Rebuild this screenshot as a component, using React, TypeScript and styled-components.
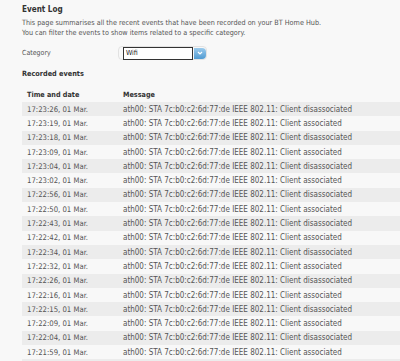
import React from 'react'
import styled, { createGlobalStyle } from 'styled-components'

const GlobalStyle = createGlobalStyle`
body {
  margin : 0;
  background : #f8f8f8;
  font-family : "DejaVu Sans Condensed", "DejaVu Sans", sans-serif;
  color : #555;
}
`

const Page = styled.div`
padding : 3px 0 0 22px;
overflow : hidden;
height : 361px;
box-sizing : border-box;
`

const Title = styled.h1`
margin : 0;
font-size : 8.1px;
font-weight : bold;
color : #333;
line-height : 12px;
`

const Intro = styled.p`
margin : 3px 0 0;
font-size : 7.2px;
line-height : 10px;
`

const FilterRow = styled.div`
display : flex;
align-items : center;
margin-top : 8px;
height : 14px;
`

const Label = styled.span`
width : 96px;
font-size : 7px;
`

const SelectWrap = styled.div`
display : flex;
align-items : center;
padding-left : 4px;
border : solid 1px #e2e2e2;
border-radius : 4px;
height : 12px;
`

const SelectBox = styled.div`
width : 66px;
height : 11px;
border : solid 1px #333;
background : white;
font-size : 7px;
line-height : 11px;
padding-left : 2px;
color : #222;
`

const SelectButton = styled.div`
width : 12px;
height : 11px;
margin-left : 1px;
border-radius : 0 4px 4px 0;
background : linear-gradient(#9ccbec, #4f9ad2);
display : flex;
align-items : center;
justify-content : center;
`

const Section = styled.h2`
margin : 8px 0 0;
font-size : 7.25px;
font-weight : bold;
color : #333;
line-height : 12px;
`

const EventList = styled.div`
margin-top : 6px;
width : 378px;
`

const Line = styled.div<{ $striped?: boolean; $head?: boolean }>`
display : flex;
align-items : center;
height : ${p => p.$head ? '16px' : '14.3px'};
background : ${p => p.$striped ? '#ececec' : 'transparent'};
font-size : ${p => p.$head ? '7.2px' : '7.7px'};
font-weight : ${p => p.$head ? 'bold' : 'normal'};
color : ${p => p.$head ? '#333' : '#555'};
white-space : nowrap;
`

const TimeCol = styled.span`
width : 91px;
padding-left : 5px;
flex-shrink : 0;
`

const MessageCol = styled.span<{ $head?: boolean }>`
padding-left : 5px;
font-size : ${p => p.$head ? '7.2px' : '8px'};
`

const times = [
  '17:23:26', '17:23:19', '17:23:18', '17:23:09', '17:23:04', '17:23:02',
  '17:22:56', '17:22:50', '17:22:43', '17:22:42', '17:22:34', '17:22:32',
  '17:22:26', '17:22:16', '17:22:15', '17:22:09', '17:22:04', '17:21:59',
]

const events = times.map((t, i) => ({
  time: `${t}, 01 Mar.`,
  message: `ath00: STA 7c:b0:c2:6d:77:de IEEE 802.11: Client ${i % 2 === 0 ? 'disassociated' : 'associated'}`,
}))

const App = () => {
  return (
    <>
      <GlobalStyle />
      <Page>
        <Title>Event Log</Title>
        <Intro>
          This page summarises all the recent events that have been recorded on your BT Home Hub.<br />
          You can filter the events to show items related to a specific category.
        </Intro>
        <FilterRow>
          <Label>Category</Label>
          <SelectWrap>
            <SelectBox>Wifi</SelectBox>
            <SelectButton>
              <svg width="6" height="4" viewBox="0 0 6 4">
                <path d="M1 1 L3 3 L5 1" stroke="white" strokeWidth="1.2" fill="none" />
              </svg>
            </SelectButton>
          </SelectWrap>
        </FilterRow>
        <Section>Recorded events</Section>
        <EventList>
          <Line $head>
            <TimeCol>Time and date</TimeCol>
            <MessageCol $head>Message</MessageCol>
          </Line>
          {events.map((e, i) => (
            <Line key={i} $striped={i % 2 === 0}>
              <TimeCol>{e.time}</TimeCol>
              <MessageCol>{e.message}</MessageCol>
            </Line>
          ))}
          {/* next row is cut off by the bottom of the window */}
          <Line $striped />
        </EventList>
      </Page>
    </>
  )
}

export default App
